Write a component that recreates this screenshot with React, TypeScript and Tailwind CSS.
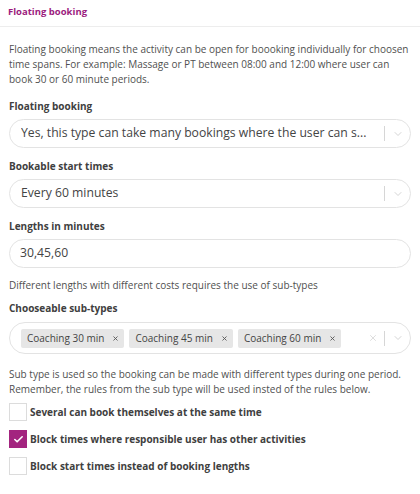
import { ChevronDown, X, Check } from 'lucide-react';

function Chevron() {
  return (
    <div className="flex items-center">
      <span className="w-px h-[15px] bg-[#d6d6d6]"></span>
      <span className="w-[25px] flex justify-center text-[#c6c6c6]">
        <ChevronDown size={12} strokeWidth={1.5} />
      </span>
    </div>
  );
}

function Tag({ label }: { label: string }) {
  return (
    <span className="flex items-center bg-[#e6e6e6] rounded-[2px] text-[10px] text-[#444] h-[19px] pl-[6px] pr-[5px] gap-[8px] whitespace-nowrap">
      {label}
      <X size={7} strokeWidth={3} className="text-[#555]" />
    </span>
  );
}

function CheckRow({ label, checked }: { label: string; checked?: boolean }) {
  return (
    <div className="flex items-center gap-[3px] h-[18px]">
      {checked ? (
        <span className="w-[18px] h-[18px] bg-[#a3247f] flex items-center justify-center text-white">
          <Check size={11} strokeWidth={3.5} />
        </span>
      ) : (
        <span className="w-[18px] h-[18px] bg-white border border-[#dcdcdc]"></span>
      )}
      <span className="text-[10px] leading-[14px] font-bold text-[#404040]">{label}</span>
    </div>
  );
}

export default function App() {
  return (
    <div className="w-[420px] h-[494px] bg-white overflow-hidden" style={{ fontFamily: '"Open Sans", sans-serif' }}>
      {/* Header */}
      <div className="h-[27px] border-b border-[#ededed] px-2 pt-[5px]">
        <div className="text-[9.5px] leading-[14px] font-bold text-[#9b1b7e]">Floating booking</div>
      </div>

      <div className="px-[9px] pt-[15px] text-[#505050]">
        <p className="text-[10px] leading-[15px] whitespace-nowrap">
          Floating booking means the activity can be open for boooking individually for choosen
          <br />
          time spans. For example: Massage or PT between 08:00 and 12:00 where user can
          <br />
          book 30 or 60 minute periods.
        </p>

        <div className="mt-[12px] text-[10px] leading-[14px] font-bold text-[#404040]">Floating booking</div>
        <div className="mt-[6px] h-[29px] border border-[#e3e3e3] rounded-full flex items-center pl-[11px]">
          <span className="flex-1 text-[12.2px] text-[#444] whitespace-nowrap overflow-hidden">Yes, this type can take many bookings where the user can s...</span>
          <Chevron />
        </div>

        <div className="mt-[11px] text-[10px] leading-[14px] font-bold text-[#404040]">Bookable start times</div>
        <div className="mt-[6px] h-[29px] border border-[#e3e3e3] rounded-full flex items-center pl-[11px]">
          <span className="flex-1 text-[12.2px] text-[#444]">Every 60 minutes</span>
          <Chevron />
        </div>

        <div className="mt-[11px] text-[10px] leading-[14px] font-bold text-[#404040]">Lengths in minutes</div>
        <div className="mt-[6px] h-[29px] border border-[#e3e3e3] rounded-full flex items-center pl-[10px]">
          <span className="text-[12.2px] text-[#444]">30,45,60</span>
        </div>

        <p className="mt-[10px] text-[10px] leading-[15px]">Different lengths with different costs requires the use of sub-types</p>

        <div className="mt-[8px] text-[10px] leading-[14px] font-bold text-[#404040]">Chooseable sub-types</div>
        <div className="mt-[7px] h-[32px] border border-[#e3e3e3] rounded-full flex items-center pl-[11px]">
          <div className="flex-1 flex items-center gap-[5px]">
            <Tag label="Coaching 30 min" />
            <Tag label="Coaching 45 min" />
            <Tag label="Coaching 60 min" />
          </div>
          <span className="w-[22px] flex justify-center text-[#c8c8c8]">
            <X size={10} strokeWidth={1.5} />
          </span>
          <Chevron />
        </div>

        <p className="mt-[13px] text-[10px] leading-[15px] whitespace-nowrap">
          Sub type is used so the booking can be made with different types during one period.
          <br />
          Remember, the rules from the sub type will be used insted of the rules below.
        </p>

        <div className="mt-[6px] flex flex-col gap-[9px]">
          <CheckRow label="Several can book themselves at the same time" />
          <CheckRow label="Block times where responsible user has other activities" checked />
          <CheckRow label="Block start times instead of booking lengths" />
        </div>
      </div>
    </div>
  );
}
